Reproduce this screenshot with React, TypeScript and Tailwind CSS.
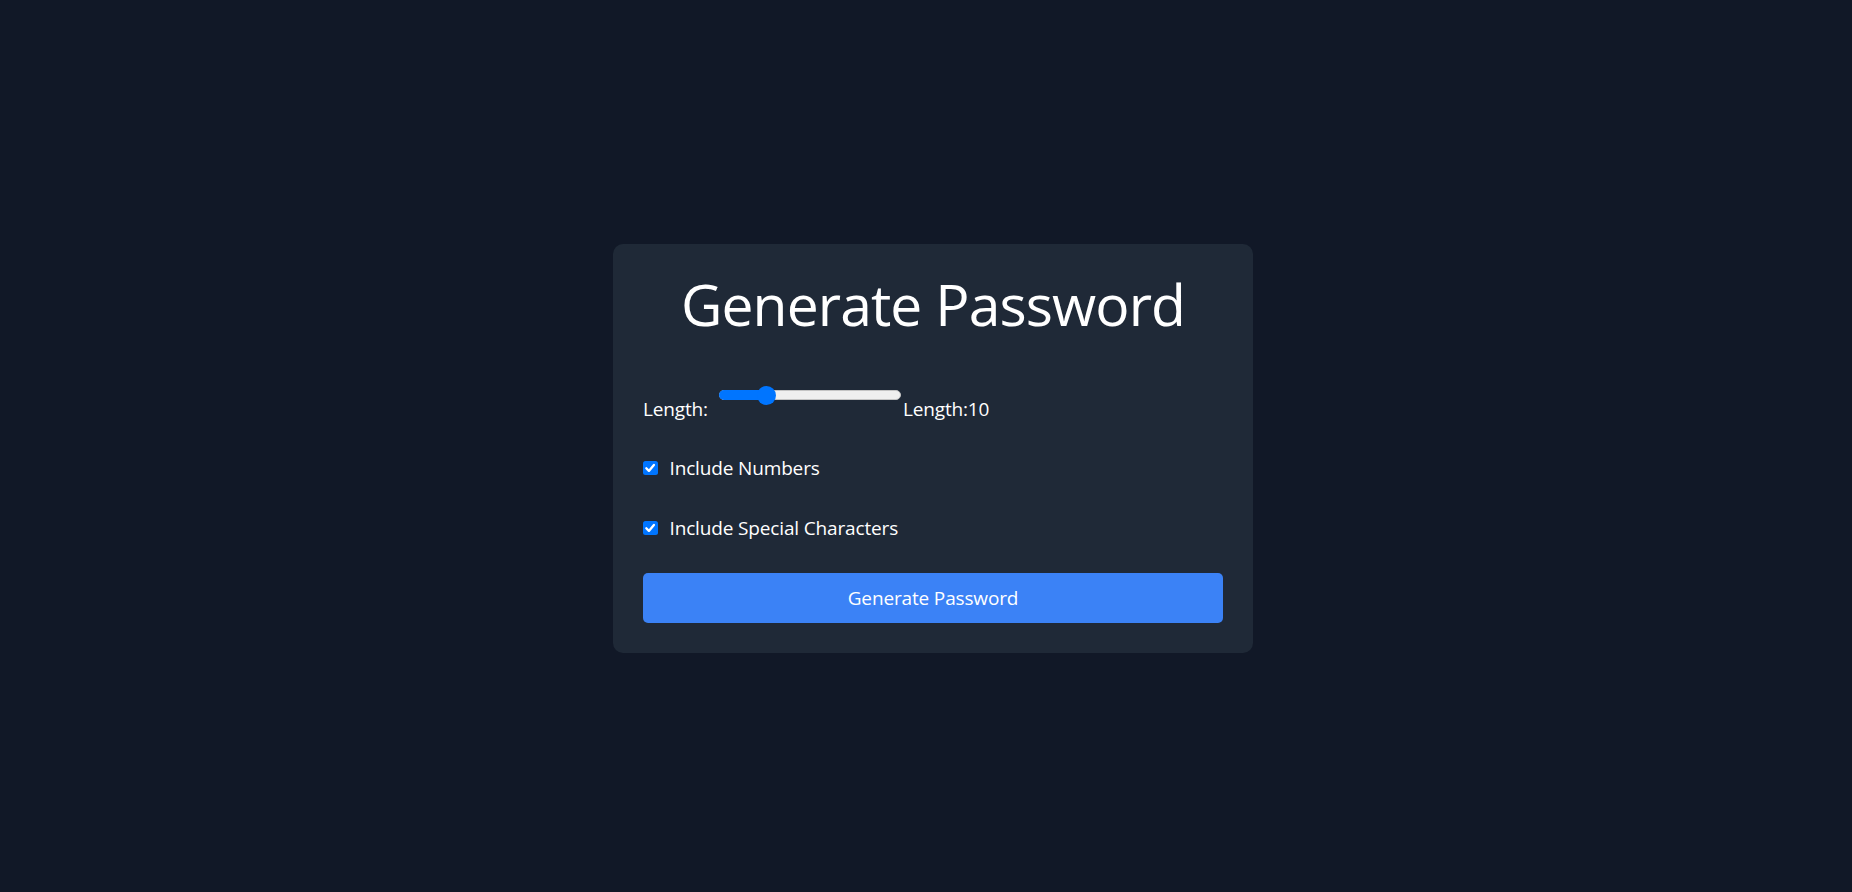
import { useState } from 'react';

const MIN = 1;
const MAX = 40;

function LengthSlider({ value, onChange }: { value: number; onChange: (v: number) => void }) {
  // track 182px, thumb 19px -> thumb centre travels 9.5 .. 172.5
  const pct = (value - MIN) / (MAX - MIN);
  const center = 9.5 + pct * 163;

  return (
    <div className="relative ml-[11px] h-[20px] w-[182px] shrink-0">
      <div className="absolute left-0 right-0 top-[5px] h-[10px] rounded-full border border-[#c4c4c4] bg-[#efefef]" />
      <div
        className="absolute left-0 top-[5px] h-[10px] rounded-full bg-[#0075ff]"
        style={{ width: center + 5 }}
      />
      <div
        className="absolute top-[0.5px] h-[19px] w-[19px] rounded-full bg-[#0075ff]"
        style={{ left: center - 9.5 }}
      />
      <input
        type="range"
        min={MIN}
        max={MAX}
        value={value}
        onChange={(e) => onChange(Number(e.target.value))}
        className="absolute inset-0 h-full w-full cursor-pointer opacity-0"
      />
    </div>
  );
}

function Option({ label, checked, onToggle }: { label: string; checked: boolean; onToggle: () => void }) {
  return (
    <label className="flex h-[30px] cursor-pointer items-center">
      <input type="checkbox" checked={checked} onChange={onToggle} className="sr-only" />
      <span className="flex h-[14.5px] w-[14.5px] items-center justify-center rounded-[2.5px] bg-[#0075ff]">
        {checked && (
          <svg viewBox="0 0 14 14" className="h-[14px] w-[14px]">
            <path d="M3.3 7.3 L5.9 9.9 L10.9 3.9" fill="none" stroke="white" strokeWidth="2.3" strokeLinecap="round" strokeLinejoin="round" />
          </svg>
        )}
      </span>
      <span className="ml-[12px] text-[19px] leading-[30px] tracking-[-0.15px] text-white">{label}</span>
    </label>
  );
}

export default function App() {
  const [length, setLength] = useState(10);
  const [numbers, setNumbers] = useState(true);
  const [special, setSpecial] = useState(true);

  return (
    <div className="flex min-h-screen items-center justify-center bg-[#111827] pl-[14px] pt-[5px] font-['Open_Sans',sans-serif] text-white">
      <div className="w-[640px] rounded-[10px] bg-[#1f2937] p-[30px]">
        <h1 className="mb-[51px] text-center text-[57px] font-normal leading-[60px] tracking-[-0.9px] text-white">
          Generate Password
        </h1>

        <div className="flex items-start text-[19px] leading-[30px] tracking-[-0.15px]">
          <span className="mt-[9px]">Length:</span>
          <LengthSlider value={length} onChange={setLength} />
          <span className="ml-[2px] mt-[9px]">Length:{length}</span>
        </div>

        <div className="mt-[29px]">
          <Option label="Include Numbers" checked={numbers} onToggle={() => setNumbers(!numbers)} />
        </div>
        <div className="mt-[30px]">
          <Option label="Include Special Characters" checked={special} onToggle={() => setSpecial(!special)} />
        </div>

        <button className="mt-[30px] h-[50px] w-full rounded-[5px] bg-[#3b82f6] text-[19px] tracking-[-0.15px] text-white">
          Generate Password
        </button>
      </div>
    </div>
  );
}
